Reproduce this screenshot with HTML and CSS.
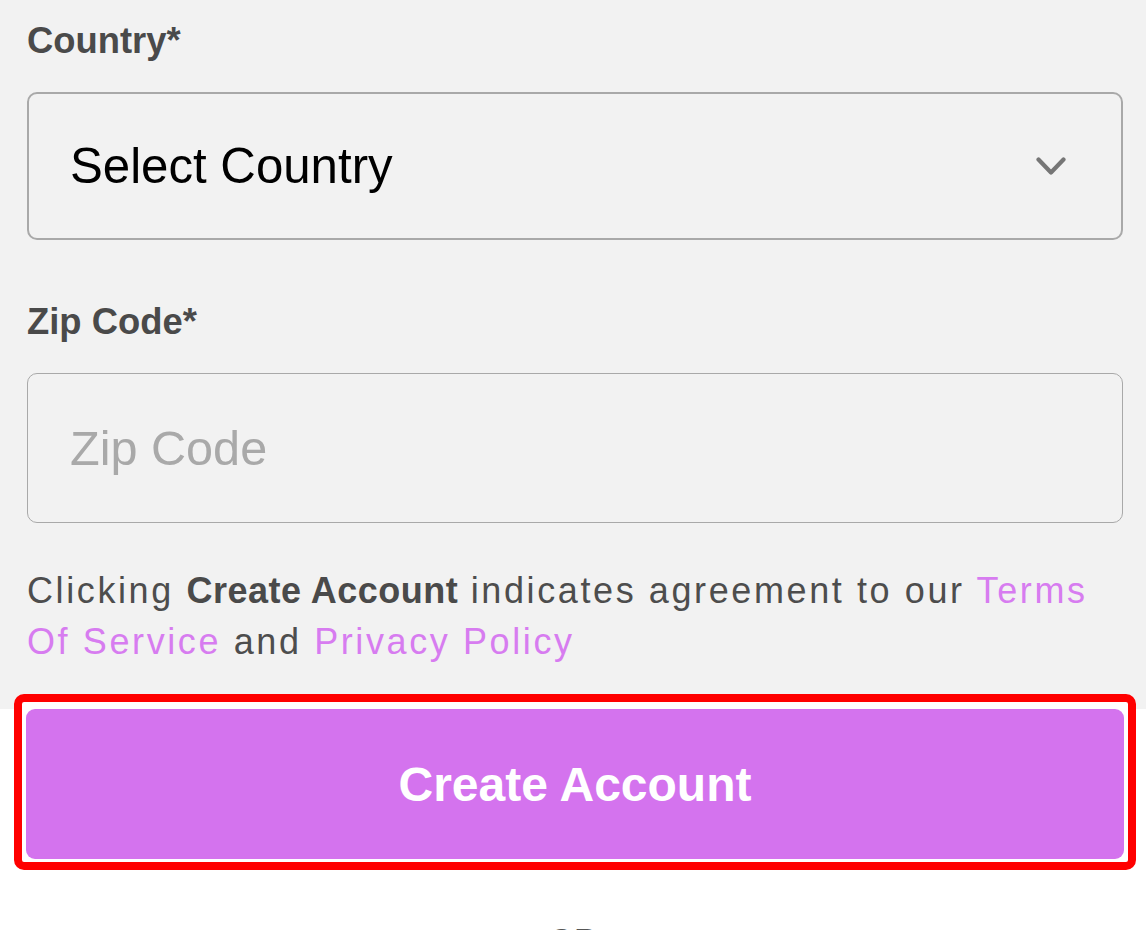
FILE: index.html
```html
<!DOCTYPE html>
<html lang="en">
<head>
<meta charset="utf-8">
<title>Create Account</title>
<link rel="stylesheet" href="styles.css">
</head>
<body>
<main class="page">
  <section class="form">
    <label class="label">Country*</label>
    <div class="select" role="combobox" aria-expanded="false">
      <span class="select-text">Select Country</span>
      <svg class="chevron" width="30" height="19" viewBox="0 0 30 19" aria-hidden="true">
        <polyline points="2.5,2.5 15,15.5 27.5,2.5" fill="none" stroke="#767676" stroke-width="4.2" stroke-linecap="round" stroke-linejoin="round"/>
      </svg>
    </div>

    <label class="label label-zip" for="zip">Zip Code*</label>
    <input class="input" id="zip" type="text" placeholder="Zip Code">

    <p class="terms">Clicking <strong>Create Account</strong> indicates agreement to our <a href="#">Terms Of Service</a> and <a href="#">Privacy Policy</a></p>
  </section>

  <section class="cta-section">
    <div class="cta">
      <button class="btn" type="button">Create Account</button>
    </div>
    <div class="or">OR</div>
  </section>
</main>
</body>
</html>
```

FILE: styles.css
```css
html, body {
  margin: 0;
  padding: 0;
  background: #ffffff;
}

body {
  font-family: "Liberation Sans", Arial, sans-serif;
  overflow: hidden;
}

.form {
  background: #f2f2f2;
  padding: 21px 23px 42px 27px;
  display: flex;
  flex-direction: column;
}

.label {
  display: block;
  font-size: 36.4px;
  line-height: 40px;
  font-weight: 700;
  color: #4a4a4a;
  margin: 0 0 31px 0;
}

.label-zip {
  margin-top: 62px;
}

.select {
  box-sizing: border-box;
  height: 148px;
  border: 2px solid #a9a9a9;
  border-radius: 10px;
  display: flex;
  align-items: center;
  justify-content: space-between;
  padding: 0 55px 0 41px;
  background: #f2f2f2;
}

.select-text {
  font-size: 49.2px;
  line-height: 56px;
  color: #000000;
}

.chevron {
  display: block;
  flex: none;
}

.input {
  box-sizing: border-box;
  height: 150px;
  width: 100%;
  border: 1px solid #a9a9a9;
  border-radius: 10px;
  background: #f2f2f2;
  padding: 0 0 0 42px;
  margin: 0;
  font-family: "Liberation Sans", Arial, sans-serif;
  font-size: 48.6px;
  color: #000000;
  outline: none;
}

.input::placeholder {
  color: #a9a9a9;
  opacity: 1;
}

.terms {
  margin: 42px 0 0 0;
  font-size: 36px;
  line-height: 51px;
  letter-spacing: 2.6px;
  color: #4d4d4d;
}

.terms strong {
  font-weight: 700;
  letter-spacing: 0.5px;
  color: #4a4a4a;
}

.terms a {
  color: #d77cf0;
  text-decoration: none;
}

.cta-section {
  background: #ffffff;
  display: flex;
  flex-direction: column;
}

.cta {
  background: #ffffff;
  margin: -7px 18px 0 22px;
  padding: 7px 4px 3px 4px;
  outline: 8px solid #ff0000;
  border-radius: 2px;
}

.btn {
  display: block;
  width: 100%;
  height: 150px;
  border: none;
  border-radius: 9px;
  background: #d473ee;
  color: #ffffff;
  font-family: "Liberation Sans", Arial, sans-serif;
  font-size: 48px;
  font-weight: 700;
  margin: 0;
  padding: 0;
  cursor: pointer;
}

.or {
  margin-top: 58px;
  text-align: center;
  font-size: 32px;
  line-height: 40px;
  color: #555555;
}
```
